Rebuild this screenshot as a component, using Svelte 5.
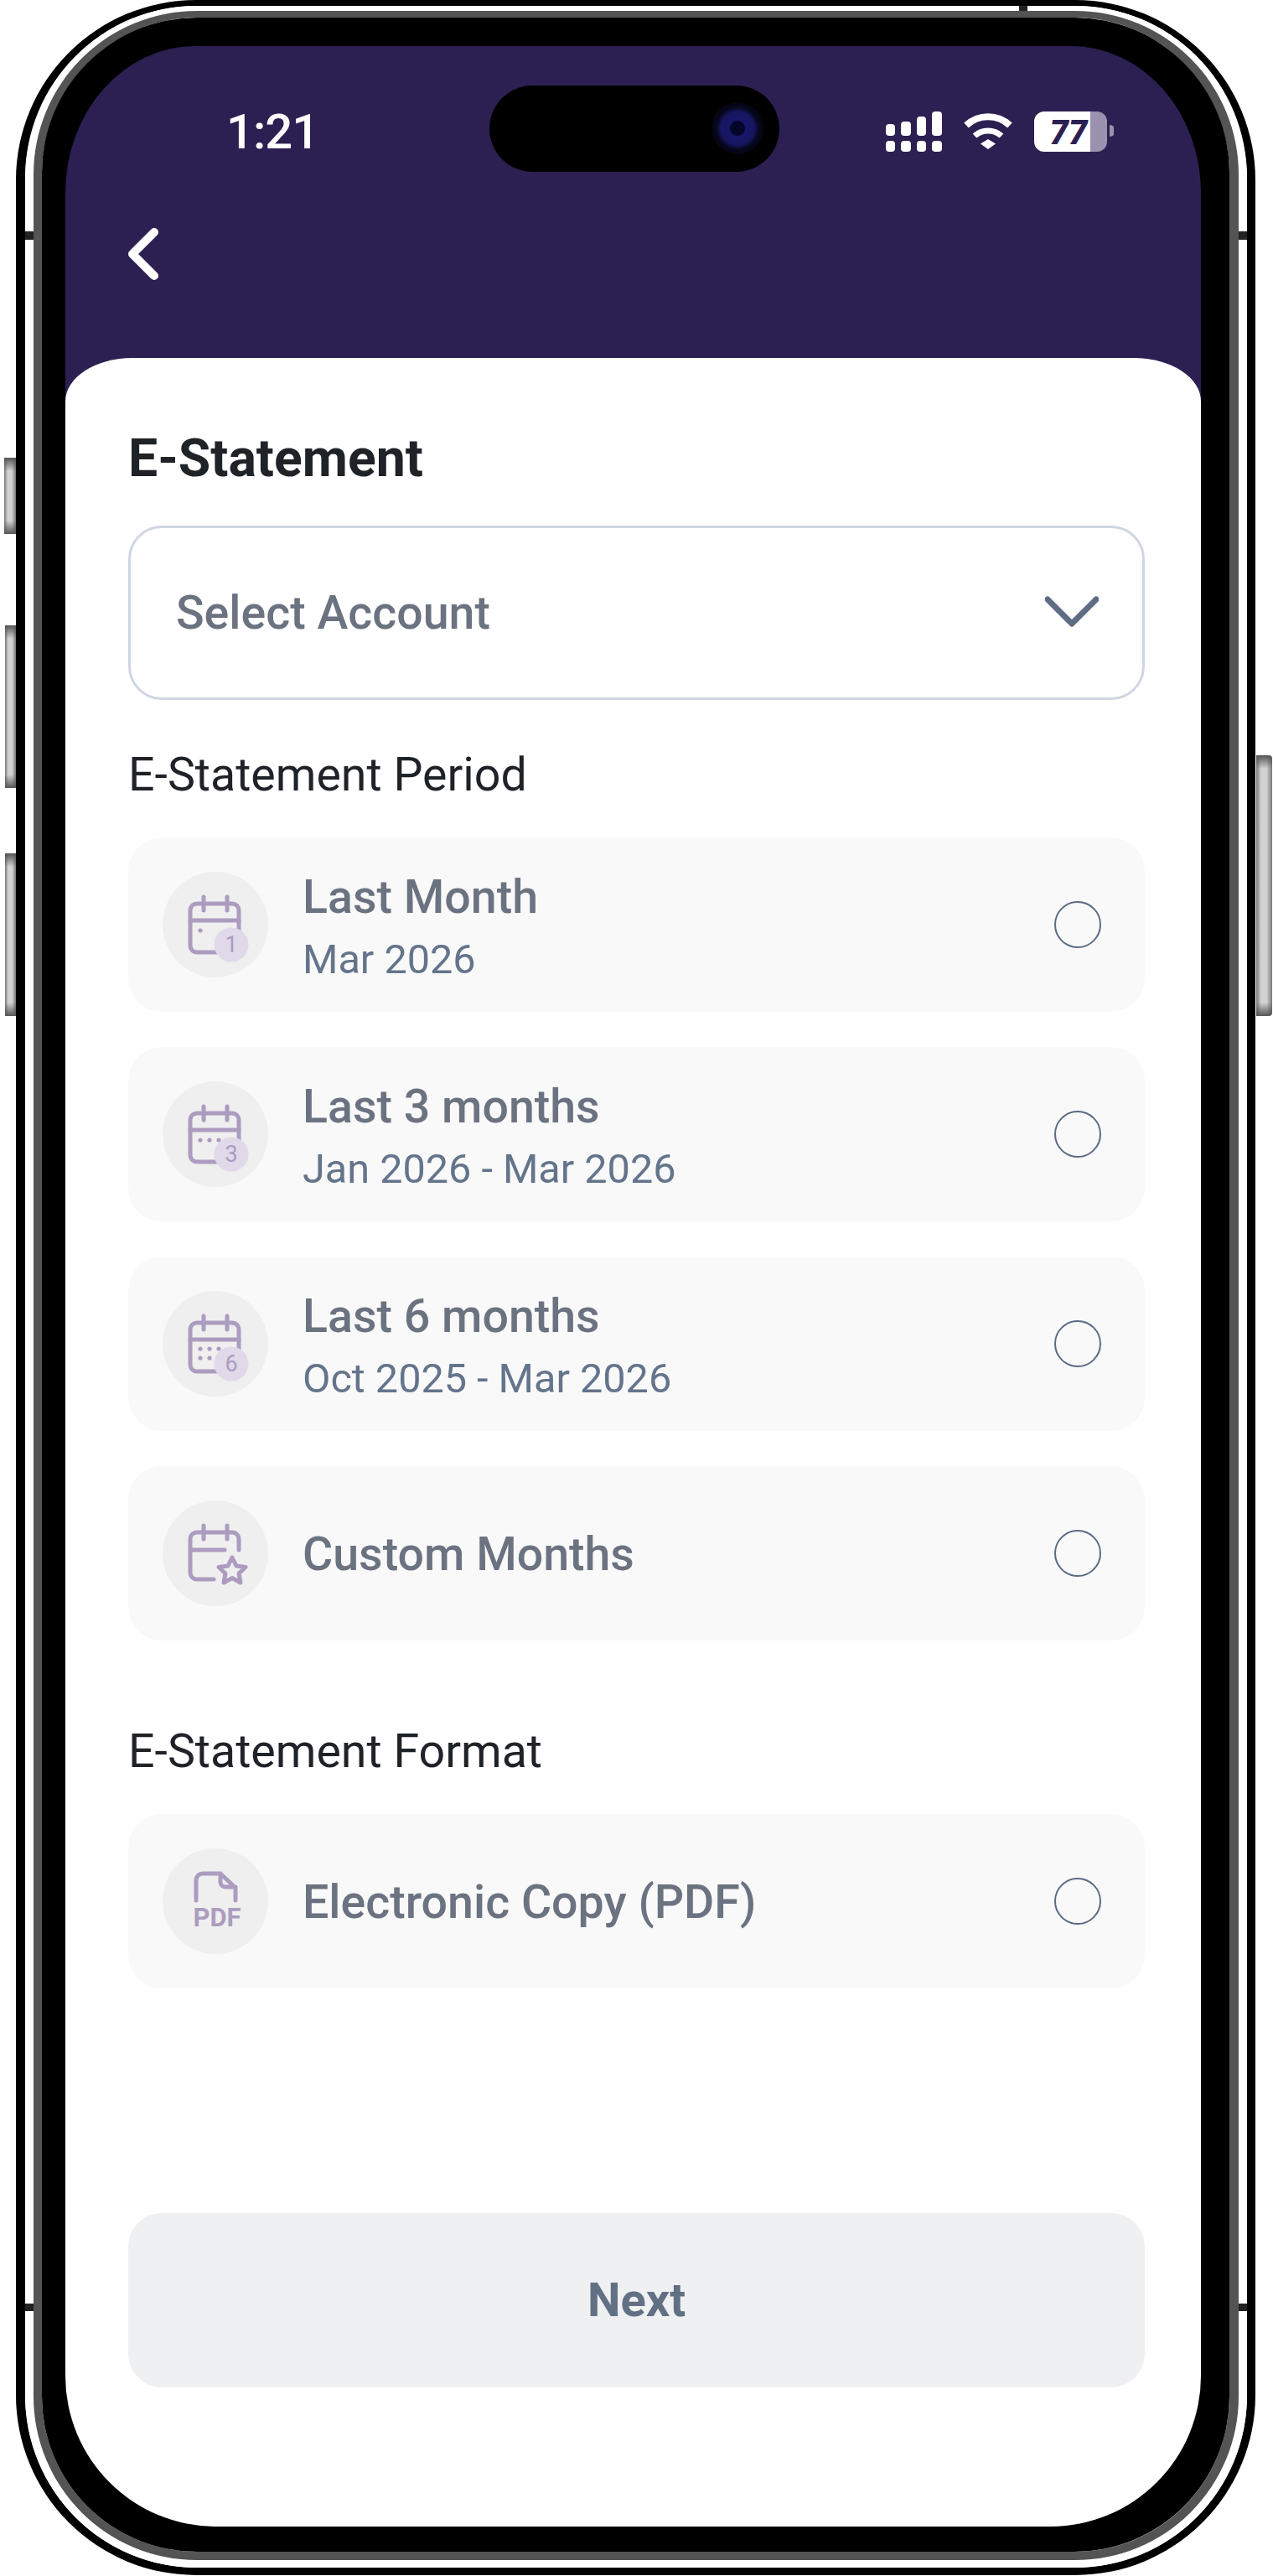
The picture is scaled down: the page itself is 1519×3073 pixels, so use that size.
<script>
  const periods = [
    { title: 'Last Month', sub: 'Mar 2026', icon: 'cal', badge: '1', dots: [[45, 70]] },
    { title: 'Last 3 months', sub: 'Jan 2026 - Mar 2026', icon: 'cal', badge: '3', dots: [[45, 70], [56, 70], [67, 70]] },
    { title: 'Last 6 months', sub: 'Oct 2025 - Mar 2026', icon: 'cal', badge: '6', dots: [[45, 69], [56, 69], [67, 69], [45, 80], [56, 80]] },
    { title: 'Custom Months', icon: 'star' }
  ];
</script>

{#snippet option(row)}
  <div class="row">
    <div class="ico">
      <svg viewBox="0 0 126 126" width="126" height="126">
        {#if row.icon === 'cal'}
          <g class="line">
            <rect x="33" y="38" width="58" height="58" rx="8" />
            <path d="M49 30v16M77 30v16M33 58h58" />
          </g>
          {#each row.dots as d}
            <circle class="dot" cx={d[0]} cy={d[1]} r="2.6" />
          {/each}
          <circle class="badge" cx="82" cy="87" r="20.5" />
          <text class="num" x="82" y="96" text-anchor="middle">{row.badge}</text>
        {:else if row.icon === 'star'}
          <g class="line">
            <path d="M91 59V46a8 8 0 0 0-8-8H41a8 8 0 0 0-8 8v40a8 8 0 0 0 8 8h20M33 59h41M49 30v16M77 30v16" />
            <path d="M83 68l5 10 11 1.500-8 7.500 2 11-10-5.500-10 5.500 2-11-8-7.500 11-1.500z" />
          </g>
        {:else}
          <g class="line">
            <path d="M40 62V38a8 8 0 0 1 8-8h21l18 17v15M69 30v10a6 6 0 0 0 6 6h12" />
          </g>
          <text class="pdf" x="65" y="93" text-anchor="middle">PDF</text>
        {/if}
      </svg>
    </div>
    <div class="txt">
      <div class="name">{row.title}</div>
      {#if row.sub}<div class="sub">{row.sub}</div>{/if}
    </div>
    <span class="radio"></span>
  </div>
{/snippet}

<div class="page">
  <span class="side b1"></span>
  <span class="side b2"></span>
  <span class="side b3"></span>
  <span class="side b4"></span>

  <div class="shell">
    <div class="ring-white">
      <span class="tick t1"></span>
      <span class="tick t2"></span>
      <span class="tick t3"></span>
      <span class="tick t4"></span>
      <span class="tick t5"></span>
      <div class="ring-gray">
        <div class="bezel">
          <div class="screen">
            <div class="head">
              <div class="status">
                <div class="time">1:21</div>
                <div class="notch"><span class="cam"></span></div>
                <svg class="icons" viewBox="1057 133 272 48" width="272" height="48">
                  <g fill="#fff">
                    <rect x="1057" y="148" width="11" height="14" rx="4" />
                    <rect x="1075" y="145" width="12" height="17" rx="4" />
                    <rect x="1094" y="139" width="11" height="23" rx="4" />
                    <rect x="1112" y="133" width="12" height="29" rx="4" />
                    <rect x="1057" y="168" width="11" height="13" rx="4" />
                    <rect x="1075" y="168" width="12" height="13" rx="4" />
                    <rect x="1094" y="168" width="11" height="13" rx="4" />
                    <rect x="1112" y="168" width="12" height="13" rx="4" />
                    <path d="M1170 171.500l9-5.500 9 5.500-9 6.500z" />
                  </g>
                  <g fill="none" stroke="#fff">
                    <path stroke-width="8" d="M1153 149.500a38 38 0 0 1 52 0" />
                    <path stroke-width="7" d="M1163 162a24 24 0 0 1 32 0" />
                  </g>
                  <path fill="#9a92ae" d="M1295 133h14a12 12 0 0 1 12 12v24a12 12 0 0 1-12 12h-14z" />
                  <path fill="#fff" d="M1246 133h55v48h-55a12 12 0 0 1-12-12v-24a12 12 0 0 1 12-12z" />
                  <path fill="#9a92ae" d="M1324 149a7 7 0 0 1 0 14z" />
                  <text class="batt" x="1275" y="172" text-anchor="middle">77</text>
                </svg>
              </div>
              <svg class="back" viewBox="0 0 40 64" width="40" height="64">
                <path d="M31 6L5 32l26 26" />
              </svg>
            </div>

            <div class="card">
              <h1>E-Statement</h1>
              <div class="select">
                <span>Select Account</span>
                <svg viewBox="0 0 64 38" width="64" height="38"><path d="M3 4l29 29 29-29" /></svg>
              </div>

              <div class="label first">E-Statement Period</div>
              <div class="list">
                {#each periods as p}
                  {@render option(p)}
                {/each}
              </div>

              <div class="label second">E-Statement Format</div>
              {@render option({ title: 'Electronic Copy (PDF)', icon: 'pdf' })}

              <button class="next">Next</button>
            </div>
          </div>
        </div>
      </div>
    </div>
  </div>
</div>

<style>
  :global(body) {
    margin: 0;
    background: #fff;
    font-family: Roboto, "Liberation Sans", sans-serif;
  }

  .page {
    position: relative;
    width: 1519px;
    height: 3073px;
    overflow: hidden;
  }

  /* hardware buttons */
  .side {
    position: absolute;
    background:
      linear-gradient(180deg, #555 0, rgba(85, 85, 85, 0) 16px, rgba(85, 85, 85, 0) calc(100% - 16px), #555 100%),
      linear-gradient(90deg, #777 0, #d2d2d2 30%, #d2d2d2 65%, #777 100%);
  }
  .b1 { left: 5px; top: 546px; width: 14px; height: 91px; }
  .b2 { left: 6px; top: 746px; width: 13px; height: 194px; }
  .b3 { left: 6px; top: 1018px; width: 13px; height: 194px; }
  .b4 { left: 1499px; top: 901px; width: 19px; height: 311px; border-radius: 0 4px 4px 0; }

  .shell {
    box-sizing: border-box;
    margin-left: 19px;
    width: 1479px;
    height: 3072px;
    display: flex;
    background: #fff;
    border: solid #000;
    border-width: 7px 10px 9px 11px;
    border-radius: 215px;
  }
  .ring-white {
    position: relative;
    box-sizing: border-box;
    flex: 1;
    display: flex;
    border: solid #fff;
    border-width: 6px 10px 9px 10px;
    border-radius: 205px;
  }
  .tick {
    position: absolute;
    background: #222;
  }
  .t1 { left: -10px; top: 263px; width: 10px; height: 10px; }
  .t2 { right: -10px; top: 263px; width: 10px; height: 10px; }
  .t3 { left: -10px; top: 2735px; width: 10px; height: 9px; }
  .t4 { right: -10px; top: 2735px; width: 10px; height: 9px; }
  .t5 { left: 1176px; top: -6px; width: 10px; height: 6px; }
  .ring-gray {
    box-sizing: border-box;
    flex: 1;
    display: flex;
    border: solid #545454;
    border-width: 8px 11px 10px 10px;
    border-radius: 195px;
  }
  .bezel {
    box-sizing: border-box;
    flex: 1;
    display: flex;
    background: #000;
    padding: 34px 34px 30px 28px;
    border-radius: 185px;
  }

  .screen {
    flex: 1;
    min-width: 0;
    display: flex;
    flex-direction: column;
    background: #2c2052;
    border-radius: 155px 155px 180px 180px / 175px 175px 180px 180px;
    overflow: hidden;
  }

  .head {
    height: 372px;
    flex: none;
  }
  .status {
    display: flex;
    align-items: center;
    height: 103px;
    margin-top: 47px;
    padding-left: 194px;
  }
  .time {
    width: 104px;
    margin-left: -2px;
    margin-right: 2px;
    margin-top: 7px;
    color: #fff;
    font-size: 58px;
    font-weight: 500;
    letter-spacing: -1px;
    line-height: 1;
    white-space: nowrap;
  }
  .notch {
    position: relative;
    margin-left: 208px;
    width: 346px;
    height: 103px;
    background: #000;
    border-radius: 52px;
  }
  .cam {
    position: absolute;
    left: 265px;
    top: 20px;
    width: 62px;
    height: 62px;
    border-radius: 50%;
    background: radial-gradient(circle, #05052a 0, #05052a 8px, #17176b 10px, #15155f 20px, #07071f 25px, #040410 31px);
  }
  .icons {
    margin-left: 127px;
    margin-top: 7px;
    flex: none;
  }
  .batt {
    fill: #2c2052;
    font-family: Roboto, sans-serif;
    font-size: 40px;
    font-weight: 900;
    font-style: italic;
  }
  .back {
    display: block;
    margin: 66px 0 0 75px;
  }
  .back path {
    fill: none;
    stroke: #fff;
    stroke-width: 10;
    stroke-linecap: round;
    stroke-linejoin: round;
  }

  .card {
    flex: 1;
    display: flex;
    flex-direction: column;
    box-sizing: border-box;
    background: #fff;
    border-radius: 80px 80px 0 0 / 52px 52px 0 0;
    padding: 85px 67px 166px 75px;
  }
  h1 {
    margin: 0;
    color: #1f2328;
    font-size: 62.5px;
    font-weight: 700;
    line-height: 70px;
  }
  .select {
    box-sizing: border-box;
    height: 208px;
    margin-top: 45px;
    padding: 0 52px 0 54px;
    display: flex;
    align-items: center;
    justify-content: space-between;
    border: 3px solid #cfd6e2;
    border-radius: 40px;
    color: #6b7280;
    font-size: 55.5px;
    font-weight: 500;
  }
  .select span {
    margin-top: 1px;
  }
  .select svg {
    margin-top: -3px;
  }
  .select path {
    fill: none;
    stroke: #5f6d82;
    stroke-width: 7;
    stroke-linecap: round;
    stroke-linejoin: round;
  }

  .label {
    color: #1f2328;
    font-size: 55.5px;
    line-height: 64px;
  }
  .first { margin: 58px 0 42px; }
  .second { margin: 101px 0 42px; }

  .list {
    display: flex;
    flex-direction: column;
    gap: 42px;
  }
  .row {
    box-sizing: border-box;
    height: 208px;
    padding: 0 52px 0 41px;
    display: flex;
    align-items: center;
    background: #f9f9f9;
    border-radius: 40px;
  }
  .ico {
    width: 126px;
    height: 126px;
    flex: none;
    border-radius: 50%;
    background: #efefef;
  }
  .ico svg { display: block; }
  .line {
    fill: none;
    stroke: #ac9cc0;
    stroke-width: 5;
    stroke-linecap: round;
    stroke-linejoin: round;
  }
  .dot { fill: #ac9cc0; }
  .badge { fill: #e0d9e9; }
  .num {
    fill: #ac9cc0;
    font-family: Roboto, sans-serif;
    font-size: 27px;
  }
  .pdf {
    fill: #ac9cc0;
    font-family: Roboto, sans-serif;
    font-size: 31px;
    font-weight: 700;
  }
  .txt {
    flex: 1;
    margin-left: 41px;
    margin-top: 4px;
  }
  .name {
    color: #6b7280;
    font-size: 55.5px;
    font-weight: 500;
    line-height: 66px;
  }
  .sub {
    margin-top: 13px;
    color: #64748b;
    font-size: 48.6px;
    line-height: 56px;
  }
  .radio {
    box-sizing: border-box;
    width: 56px;
    height: 56px;
    flex: none;
    border: 2.5px solid #5a6b85;
    border-radius: 50%;
  }

  .next {
    margin-top: auto;
    height: 208px;
    border: 0;
    border-radius: 40px;
    background: #eff0f2;
    color: #627083;
    font-family: inherit;
    font-size: 56px;
    font-weight: 700;
  }
</style>
